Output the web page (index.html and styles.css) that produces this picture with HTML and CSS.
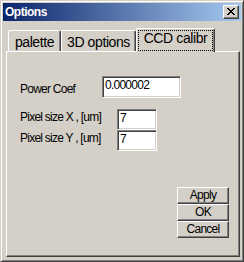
FILE: index.html
```html
<!DOCTYPE html>
<html>
<head>
<meta charset="utf-8">
<link rel="stylesheet" href="styles.css">
</head>
<body>
<div class="window">
  <div class="titlebar">
    <span class="title">Options</span>
    <span class="close">
      <svg width="8" height="7" viewBox="0 0 8 7" shape-rendering="crispEdges"><path d="M0 0h2v1H0zM6 0h2v1H6zM1 1h2v1H1zM5 1h2v1H5zM2 2h4v1H2zM3 3h2v1H3zM2 4h4v1H2zM1 5h2v1H1zM5 5h2v1H5zM0 6h2v1H0zM6 6h2v1H6z" fill="#000"/></svg>
    </span>
  </div>
  <div class="tabs">
    <div class="tab tab-palette">palette</div>
    <div class="tab tab-3d">3D options</div>
    <div class="tab tab-ccd selected"><span class="focus">CCD calibr</span></div>
  </div>
  <div class="panel">
    <div class="row row-power">
      <span class="label label-power">Power Coef</span>
      <div class="field field-power">0.000002</div>
    </div>
    <div class="pixel-rows">
      <div class="row row-pixel">
        <span class="label label-pixel">Pixel size X , [um]</span>
        <div class="field field-small">7</div>
      </div>
      <div class="row row-pixel">
        <span class="label label-pixel">Pixel size Y , [um]</span>
        <div class="field field-small">7</div>
      </div>
    </div>
    <div class="buttons">
      <div class="button">Apply</div>
      <div class="button">OK</div>
      <div class="button">Cancel</div>
    </div>
  </div>
</div>
</body>
</html>
```
FILE: styles.css
```css
html, body {
  margin: 0;
  padding: 0;
  background: #d4d0c8;
}
body {
  font-family: "Liberation Sans", Arial, sans-serif;
  font-size: 12px;
  color: #000;
}
.window {
  box-sizing: border-box;
  width: 244px;
  height: 262px;
  background: #d4d0c8;
  border: 1px solid;
  border-color: #d4d0c8 #404040 #404040 #d4d0c8;
  box-shadow: inset 1px 1px #ffffff, inset -1px -1px #808080;
  padding: 2px;
  display: flex;
  flex-direction: column;
}
.titlebar {
  height: 18px;
  flex: none;
  display: flex;
  align-items: center;
  justify-content: space-between;
  background: linear-gradient(to right, #0a246a, #a6caf0);
}
.title {
  color: #fff;
  font-weight: bold;
  font-size: 12px;
  line-height: 18px;
  letter-spacing: -0.5px;
  padding-left: 2px;
}
.close {
  box-sizing: border-box;
  width: 16px;
  height: 14px;
  margin-right: 2px;
  background: #d4d0c8;
  border: 1px solid;
  border-color: #ffffff #404040 #404040 #ffffff;
  box-shadow: inset -1px -1px #808080;
  display: flex;
  align-items: flex-start;
  justify-content: flex-start;
  padding: 2px 0 0 3px;
}
.close svg {
  display: block;
}
.tabs {
  flex: none;
  height: 23px;
  margin: 7px 0 0 5px;
  display: flex;
  align-items: flex-end;
}
.tab {
  box-sizing: border-box;
  height: 21px;
  font-size: 14px;
  letter-spacing: -0.4px;
  line-height: 16px;
  text-align: center;
  padding-top: 3px;
  background: #d4d0c8;
  border-top: 1px solid #fff;
  border-left: 1px solid #fff;
  border-right: 1px solid #404040;
  border-radius: 2px 2px 0 0;
  box-shadow: inset -1px 0 #808080;
}
.tab-palette { width: 53px; }
.tab-3d { width: 75px; }
.tab.selected {
  width: 79px;
  height: 24px;
  margin-bottom: -1px;
  padding: 1px 1px 0 1px;
  position: relative;
  z-index: 1;
}
.focus {
  display: block;
  box-sizing: border-box;
  height: 21px;
  outline: 1px dotted #000;
  outline-offset: -1px;
  padding-top: 0;
  line-height: 16px;
}
.panel {
  box-sizing: border-box;
  flex: none;
  height: 206px;
  margin: 0 1px 0 3px;
  padding: 0 0 0 13px;
  border: 1px solid;
  border-color: #ffffff #404040 #404040 #ffffff;
  box-shadow: inset -1px -1px #808080;
  display: flex;
  flex-direction: column;
}
.row {
  display: flex;
  align-items: flex-start;
}
.row-power {
  margin-top: 24px;
}
.label {
  line-height: 14px;
  letter-spacing: -0.75px;
  white-space: nowrap;
}
.label-power {
  width: 82px;
  padding-top: 6px;
}
.label-pixel {
  width: 97px;
  padding-top: 1px;
}
.pixel-rows {
  margin-top: 11px;
}
.field {
  box-sizing: border-box;
  background: #fff;
  border: 1px solid;
  border-color: #808080 #ffffff #ffffff #808080;
  box-shadow: inset 1px 1px #404040, inset -1px -1px #d4d0c8;
  line-height: 14px;
  letter-spacing: -0.75px;
  padding: 1px 0 0 2px;
}
.field-power {
  width: 79px;
  height: 22px;
}
.field-small {
  width: 40px;
  height: 21px;
}
.buttons {
  margin: 36px 10px 0 auto;
  width: 52px;
  display: flex;
  flex-direction: column;
}
.button {
  box-sizing: border-box;
  height: 17px;
  line-height: 15px;
  text-align: center;
  letter-spacing: -0.75px;
  border: 1px solid;
  border-color: #ffffff #404040 #404040 #ffffff;
  box-shadow: inset -1px -1px #808080;
}
```
